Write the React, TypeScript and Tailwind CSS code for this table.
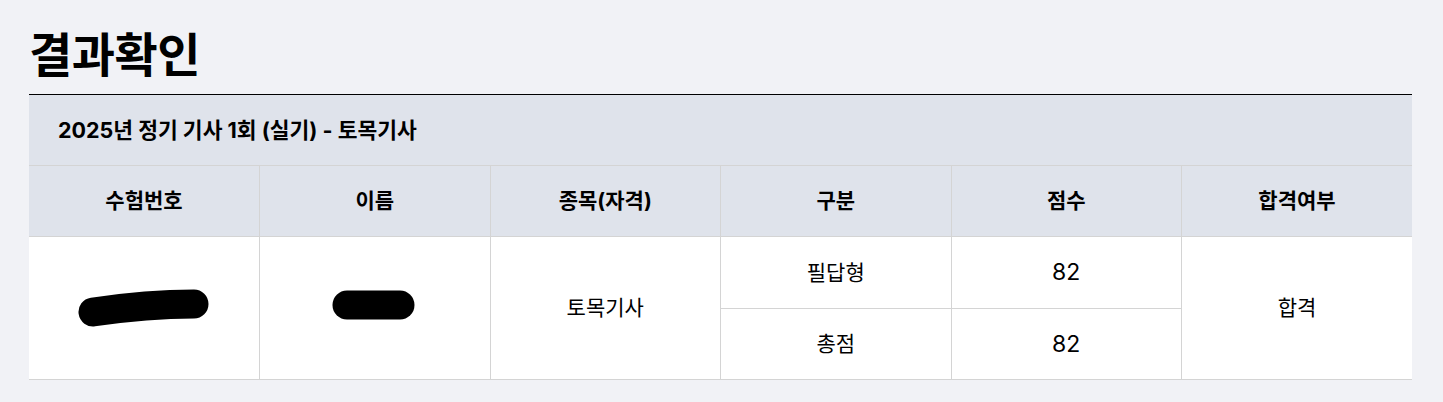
const font = { fontFamily: 'Inter, "Noto Sans CJK KR", sans-serif' }

function Redact({ w, h, d, className = '' }: { w: number; h: number; d: string; className?: string }) {
  return (
    <svg width={w} height={h} viewBox={`0 0 ${w} ${h}`} className={`inline-block align-middle ${className}`}>
      <path d={d} stroke="#000" strokeWidth={29} strokeLinecap="round" fill="none" />
    </svg>
  )
}

export default function App() {
  const cell = 'border border-[#d4d4d4] text-center text-black'
  return (
    <div className="min-h-screen bg-[#f1f2f6] pl-[29px] pr-[31px] pt-[26px] pb-5" style={font}>
      <h1 className="text-[47px] font-bold leading-[60px] text-black mb-[8px] tracking-[-0.5px]" style={{ fontFamily: 'Roboto, "Noto Sans CJK KR", sans-serif' }}>결과확인</h1>
      <table className="w-full table-fixed border-collapse border-t border-t-black">
        <thead>
          <tr className="bg-[#dfe3eb]">
            <th colSpan={6} className="h-[71px] border-b border-[#d4d4d4] pl-[29px] text-left text-[21.5px] font-bold text-black">
              2025년 정기 기사 1회 (실기) - 토목기사
            </th>
          </tr>
          <tr className="bg-[#dfe3eb]">
            {['수험번호', '이름', '종목(자격)', '구분', '점수', '합격여부'].map((t) => (
              <th key={t} className={`${cell} h-[71px] text-[21px] font-bold border-t-0 first:border-l-0 last:border-r-0`}>{t}</th>
            ))}
          </tr>
        </thead>
        <tbody className="bg-white text-[21px]">
          <tr>
            <td rowSpan={2} className={`${cell} border-l-0`}>
              <Redact w={134} h={38} d="M16 23 C50 18, 80 15, 117 15" />
            </td>
            <td rowSpan={2} className={cell}>
              <Redact w={86} h={32} d="M15 16 L68 16" className="-translate-y-[4px]" />
            </td>
            <td rowSpan={2} className={cell}>토목기사</td>
            <td className={`${cell} h-[72px]`}>필답형</td>
            <td className={`${cell} text-[23px]`}>82</td>
            <td rowSpan={2} className={`${cell} border-r-0`}>합격</td>
          </tr>
          <tr>
            <td className={`${cell} h-[71px]`}>총점</td>
            <td className={`${cell} text-[23px]`}>82</td>
          </tr>
        </tbody>
      </table>
    </div>
  )
}
